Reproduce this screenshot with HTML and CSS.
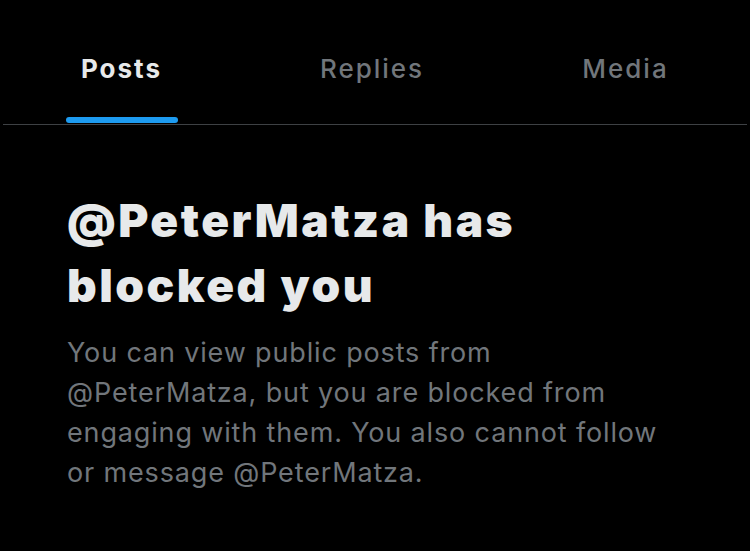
FILE: index.html
```html
<!DOCTYPE html>
<html lang="en">
<head>
  <meta charset="UTF-8">
  <meta name="viewport" content="width=device-width, initial-scale=1.0">
  <title>Blocked</title>
  <link rel="stylesheet" href="styles.css">
</head>
<body>
  <nav class="tabs">
    <div class="tab active">
      <span>Posts</span>
      <div class="tab-bar"></div>
    </div>
    <div class="tab">
      <span>Replies</span>
    </div>
    <div class="tab">
      <span>Media</span>
    </div>
  </nav>
  <div class="tab-divider"></div>

  <div class="blocked">
    <h1>@PeterMatza has blocked you</h1>
    <p>You can view public posts from @PeterMatza, but you are blocked from engaging with them. You also cannot follow or message @PeterMatza.</p>
  </div>
</body>
</html>
```

FILE: styles.css
```css
body {
  margin: 0;
  background-color: #000;
  font-family: Inter, "Liberation Sans", sans-serif;
}

.tabs {
  display: grid;
  grid-template-columns: 243px 258px 1fr;
}

.tab {
  height: 123px;
  display: flex;
  flex-direction: column;
  align-items: center;
  padding-top: 53px;
  box-sizing: border-box;
  font-size: 26px;
  font-weight: 500;
  letter-spacing: 2px;
  color: #71767b;
}

.tab.active {
  color: #e7e9ea;
  font-weight: 700;
}

.tab-bar {
  width: 112px;
  height: 6px;
  border-radius: 3px;
  background-color: #1d9bf0;
  margin-top: auto;
}

.tab-divider {
  height: 1px;
  margin: 1px 3px 0;
  background-color: #3e4144;
}

.blocked {
  padding: 63px 40px 0 67px;
}

.blocked h1 {
  max-width: 540px;
  margin: 0 0 15px;
  font-size: 46px;
  line-height: 65px;
  font-weight: 900;
  letter-spacing: 2.5px;
  color: #e7e9ea;
}

.blocked p {
  max-width: 620px;
  margin: 0;
  font-size: 27px;
  line-height: 40px;
  letter-spacing: 0.85px;
  color: #71767b;
}
```
